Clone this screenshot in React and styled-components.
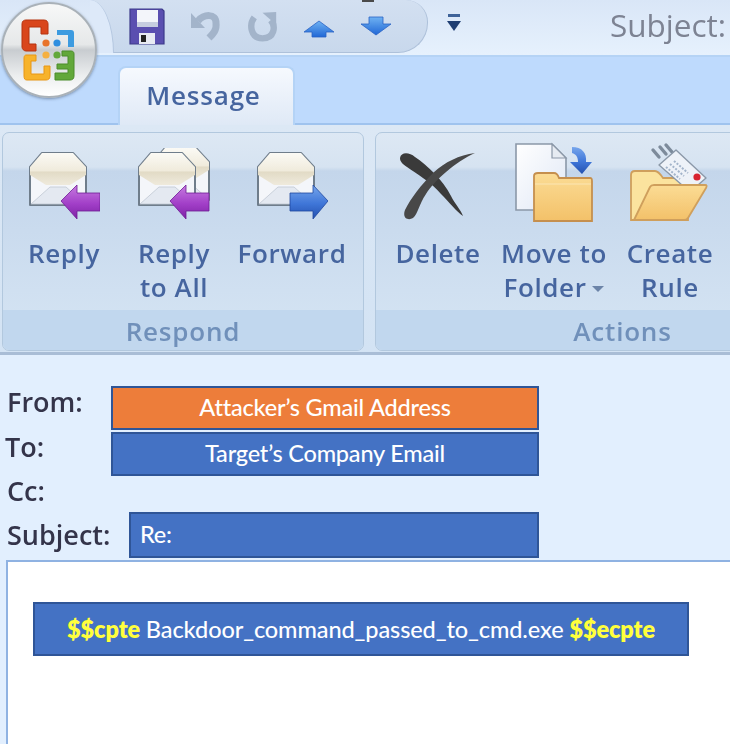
import React from 'react';
import styled, { createGlobalStyle } from 'styled-components';

const GlobalStyle = createGlobalStyle`
  html, body { margin: 0; padding: 0; background: #e2effe; }
  * { box-sizing: border-box; }
`;

const Page = styled.div`
  position: relative;
  width: 730px;
  height: 744px;
  overflow: hidden;
  background: #e2effe;
  font-family: "Open Sans", "Liberation Sans", sans-serif;
`;

// Title bar
const TitleBar = styled.div`
  height: 57px;
  padding: 0 4px 0 90px;
  display: flex;
  align-items: flex-start;
  background: linear-gradient(#d9e6f7, #e6f1fd);
  border-bottom: 2px solid #b5d3f5;
`;

const Qat = styled.div`
  position: relative;
  width: 338px;
  height: 53px;
  padding-left: 39px;
  display: flex;
  align-items: center;
  background: linear-gradient(#d3e0f1, #c8d8ec);
  border: 1px solid #aec1da;
  border-width: 0 1px 1px 0;
  border-radius: 0 22px 30px 0;

  /* the light corner that wraps round the office button */
  &::before {
    content: '';
    position: absolute;
    left: 0;
    top: 0;
    width: 23px;
    height: 53px;
    background: #dde9f9;
    border-right: 1px solid #b3c6df;
    border-radius: 0 100% 0 0;
  }
`;

const QatSlot = styled.div`
  width: ${p => p.$w}px;
  height: 44px;
  padding-top: ${p => p.$top || 0}px;
  display: flex;
  align-items: center;
  justify-content: flex-start;
  filter: blur(0.6px);
`;

const QatMore = styled.div`
  margin: 14px 0 0 19px;
  filter: blur(0.4px);
`;

const WindowTitle = styled.div`
  margin-left: auto;
  font-size: 31.5px;
  line-height: 49px;
  color: #7d8393;
  filter: blur(0.5px);
`;

const TopMark = styled.div`
  position: absolute;
  left: 362px;
  top: 0;
  width: 12px;
  height: 2px;
  background: #4a4a4a;
`;

const OfficeButton = styled.div`
  position: absolute;
  left: 1px;
  top: 2px;
  width: 96px;
  height: 96px;
  border-radius: 50%;
  border: 2px solid #a9b1b8;
  background: linear-gradient(#f7f8f8 0%, #e6e8e9 44%, #c8ccd0 50%, #eceeef 78%, #ffffff 100%);
  box-shadow: 0 1px 3px rgba(60, 80, 110, 0.55);
  display: flex;
  align-items: center;
  justify-content: center;
`;

const LogoWrap = styled.div`
  display: flex;
  filter: blur(0.7px);
`;

// Tabs
const TabStrip = styled.div`
  height: 68px;
  padding: 9px 0 0 118px;
  background: #bedafd;
  border-bottom: 2px solid #9fc3ee;
`;

const Tab = styled.div`
  width: 177px;
  height: 59px;
  padding: 9px 6px 0 0;
  text-align: center;
  font-size: 26px;
  font-weight: 600;
  letter-spacing: 0.8px;
  color: #46659f;
  background: linear-gradient(#f6f9fe, #dfe9f6);
  border: 2px solid #b4d3f6;
  border-bottom: 0;
  border-radius: 8px 8px 0 0;
  filter: blur(0.4px);
`;

const Ribbon = styled.div`
  height: 230px;
  padding: 7px 0 1px 2px;
  display: flex;
  gap: 11px;
  background: linear-gradient(#dce8f5, #d3e3f4);
  border-bottom: 3px solid #a9bdd6;
`;

const Group = styled.div`
  width: ${p => p.$w}px;
  flex: none;
  display: flex;
  flex-direction: column;
  border: 1px solid #b2c8de;
  border-radius: 7px;
  overflow: hidden;
  background: linear-gradient(#dde8f4 0, #d6e3f1 34px, #c4d6eb 38px, #d6e5f4 100%);
`;

const GroupButtons = styled.div`
  height: 177px;
  padding: 9px 0 0 ${p => p.$pad}px;
  display: flex;
`;

const GroupLabel = styled.div`
  height: 40px;
  text-align: center;
  font-size: 26px;
  font-weight: 600;
  line-height: 42px;
  letter-spacing: 0.8px;
  color: #7090ba;
  background: #c1d7ee;
  filter: blur(0.5px);
`;

const RibbonButton = styled.div`
  width: ${p => p.$w}px;
  display: flex;
  flex-direction: column;
  align-items: center;
`;

const IconBox = styled.div`
  height: 80px;
  margin-bottom: 14px;
  display: flex;
  align-items: flex-end;
  justify-content: center;
  filter: blur(0.6px);
`;

const ButtonLabel = styled.div`
  font-size: 26px;
  font-weight: 600;
  line-height: 34px;
  letter-spacing: 0.6px;
  text-align: center;
  white-space: pre-line;
  color: #46659f;
  filter: blur(0.4px);
`;

const Caret = styled.span`
  display: inline-block;
  width: 0;
  height: 0;
  margin: 0 0 5px 6px;
  border-left: 6px solid transparent;
  border-right: 6px solid transparent;
  border-top: 6px solid #6c84a8;
`;

// Message header
const Header = styled.div`
  height: 205px;
  padding-top: 31px;
  display: flex;
  flex-direction: column;
`;

const Row = styled.div`
  height: ${p => p.$h}px;
  margin-bottom: ${p => p.$gap || 0}px;
  padding-left: ${p => p.$left || 7}px;
  display: flex;
  align-items: flex-start;
`;

const FieldLabel = styled.div`
  width: ${p => p.$w}px;
  flex: none;
  font-size: 27px;
  font-weight: 600;
  line-height: ${p => p.$lh}px;
  color: #34344a;
  filter: blur(0.5px);
`;

const FieldBox = styled.div`
  width: ${p => p.$w}px;
  height: ${p => p.$h}px;
  padding: 0 9px;
  font-family: Lato, "Open Sans", sans-serif;
  font-size: 23.5px;
  font-weight: 500;
  line-height: ${p => p.$h - 6}px;
  letter-spacing: -0.2px;
  text-align: ${p => p.$align || 'center'};
  color: #ffffff;
  background: ${p => p.$bg || '#4472c4'};
  border: 2px solid #2f5597;
`;

// Message body
const Body = styled.div`
  height: 184px;
  margin-left: 6px;
  padding: 40px 0 0 25px;
  background: #ffffff;
  border-top: 2px solid #8fb2e2;
  border-left: 2px solid #8fb2e2;
`;

const CommandBox = styled.div`
  width: 656px;
  height: 54px;
  font-family: Lato, "Open Sans", sans-serif;
  font-size: 23.5px;
  font-weight: 500;
  line-height: 50px;
  letter-spacing: -0.1px;
  text-align: center;
  color: #ffffff;
  background: #4472c4;
  border: 2px solid #2f5597;
`;

const Marker = styled.span`
  font-weight: 800;
  color: #ffff3c;
`;

// Icons
const SvgDefs = () => (
  <svg width="0" height="0" style={{ position: 'absolute' }}>
    <defs>
      <linearGradient id="purple" x1="0" y1="0" x2="0" y2="1">
        <stop offset="0" stopColor="#c77be0" />
        <stop offset="0.55" stopColor="#a23fc8" />
        <stop offset="1" stopColor="#7d22a5" />
      </linearGradient>
      <linearGradient id="blue" x1="0" y1="0" x2="0" y2="1">
        <stop offset="0" stopColor="#77a6ec" />
        <stop offset="0.55" stopColor="#3f76d8" />
        <stop offset="1" stopColor="#2450ae" />
      </linearGradient>
      <linearGradient id="flap" x1="0" y1="0" x2="0" y2="1">
        <stop offset="0" stopColor="#fbfaf5" />
        <stop offset="0.55" stopColor="#f0ebdc" />
        <stop offset="0.6" stopColor="#e2dbc6" />
        <stop offset="1" stopColor="#efeadc" />
      </linearGradient>
      <linearGradient id="folder" x1="0" y1="0" x2="0" y2="1">
        <stop offset="0" stopColor="#fbdc95" />
        <stop offset="1" stopColor="#f3c169" />
      </linearGradient>
      <linearGradient id="page" x1="0" y1="0" x2="1" y2="1">
        <stop offset="0" stopColor="#ffffff" />
        <stop offset="1" stopColor="#dfe7f5" />
      </linearGradient>
      <linearGradient id="qatBlue" x1="0" y1="0" x2="0" y2="1">
        <stop offset="0" stopColor="#6fb2f2" />
        <stop offset="1" stopColor="#2067d6" />
      </linearGradient>
    </defs>
  </svg>
);

const Envelope = ({ dx = 0, dy = 0 }) => (
  <g transform={`translate(${dx} ${dy})`}>
    <path d="M14 3H45L58 17V55H2V17Z" fill="#f4f6fa" stroke="#6f7d8b" strokeWidth="2" strokeLinejoin="round" />
    <path d="M3 54L22 37H38L57 54Z" fill="#e4e9f1" stroke="#c0c8d3" strokeWidth="0.8" />
    <path d="M14 3H45L58 17V25L42 35H18L2 25V17Z" fill="url(#flap)" />
  </g>
);

const SideArrow = ({ flip, fill }) => (
  <path
    d={flip ? 'M72 51L57 35V43H34V61H57V69Z' : 'M33 51L49 35V43H72V61H49V69Z'}
    fill={`url(#${fill})`}
    stroke={fill === 'blue' ? '#1e46a0' : '#6f1c96'}
    strokeWidth="0.8"
    strokeLinejoin="round"
  />
);

const ReplyIcon = () => (
  <svg width="72" height="72" viewBox="0 0 72 72">
    <Envelope />
    <SideArrow fill="purple" />
  </svg>
);

const ReplyAllIcon = () => (
  <svg width="74" height="74" viewBox="0 0 74 74">
    <g transform="translate(0 2)">
      <Envelope dx={14} dy={-5} />
      <Envelope />
      <SideArrow fill="purple" />
    </g>
  </svg>
);

const ForwardIcon = () => (
  <svg width="72" height="72" viewBox="0 0 72 72">
    <Envelope />
    <SideArrow flip fill="blue" />
  </svg>
);

const DeleteIcon = () => (
  <svg width="78" height="72" viewBox="0 0 78 72">
    <path d="M1 8C2 2 10 2 16 7C28 15 44 30 52 46C56 54 62 60 64 66C58 62 50 52 42 44C32 32 18 24 8 17C4 14 1 12 1 8Z" fill="#3a3a3a" />
    <path d="M76 3C60 5 46 12 34 23C22 35 12 48 6 60C3 68 9 71 14 68C19 64 20 54 27 44C36 30 56 12 76 3Z" fill="#484848" />
  </svg>
);

const MoveIcon = () => (
  <svg width="80" height="80" viewBox="0 0 80 80">
    <path d="M2 2H38L52 16V68H2Z" fill="url(#page)" stroke="#8b98a8" strokeWidth="1.6" />
    <path d="M38 2V16H52Z" fill="#e6ebf2" stroke="#8b98a8" strokeWidth="1.2" />
    <path d="M58 5C68 5 73 11 72 20H78L68 32L56 20H64C64 15 62 12 58 11Z" fill="url(#blue)" />
    <path d="M20 79V34C20 31 22 31 24 31H40C43 31 44 33 45 36H76C78 36 78 37 78 39V79Z" fill="url(#folder)" stroke="#c58f4e" strokeWidth="1.8" />
    <path d="M21 42H77" stroke="#fce6b3" strokeWidth="1.2" />
  </svg>
);

const RuleIcon = () => (
  <svg width="80" height="80" viewBox="0 0 80 80">
    <path d="M23 8L29 15M30 5L36 12M36 3L42 10" stroke="#7d8b9b" strokeWidth="3.4" strokeLinecap="round" />
    <path d="M1 78V33C1 30 3 29 5 29H25C28 29 31 33 33 36H58V78Z" fill="#fbe39e" stroke="#cf9f5c" strokeWidth="1.8" />
    <path d="M46 8L76 36L60 50L29 23Z" fill="#eef2f8" stroke="#8b98a8" strokeWidth="1.4" strokeLinejoin="round" />
    <path d="M40 22L54 34M36 25L50 37M44 19L58 31" stroke="#a3b4ca" strokeWidth="2" strokeDasharray="2 1.5" />
    <circle cx="67" cy="35" r="3.6" fill="#d8242f" />
    <path d="M4 78L20 45C21 43 22 43 24 43H75C77 43 77 44 76 46L58 76C57 78 56 78 54 78Z" fill="url(#folder)" stroke="#cf9f5c" strokeWidth="1.8" strokeLinejoin="round" />
  </svg>
);

const SaveIcon = () => (
  <svg width="36" height="37" viewBox="0 0 36 37">
    <path d="M1 1H33L35 3V36H1Z" fill="#5a4fb0" stroke="#3d3a8a" strokeWidth="1.2" />
    <rect x="8" y="2" width="21" height="17" fill="#f3f5fa" />
    <rect x="8" y="14" width="21" height="5" fill="#c6cde0" />
    <rect x="10" y="25" width="16" height="11" fill="#e8ebf3" />
    <rect x="12" y="27" width="5" height="7" fill="#222" />
  </svg>
);

const UndoIcon = () => (
  <svg width="32" height="32" viewBox="0 0 32 32">
    <path d="M2 3V18H16Z" fill="#a3b4ca" />
    <path d="M9 11C15 4 27 3 27 13C28 20 24 24 20 28" fill="none" stroke="#a3b4ca" strokeWidth="7" />
  </svg>
);

const RedoIcon = () => (
  <svg width="31" height="31" viewBox="0 0 34 34">
    <path d="M17 2L32 1V15Z" fill="#a3b4ca" />
    <path d="M8 7C2 15 4 30 17 30C30 30 32 17 26 10" fill="none" stroke="#a3b4ca" strokeWidth="7" />
  </svg>
);

const UpIcon = () => (
  <svg width="32" height="18" viewBox="0 0 32 18">
    <path d="M16 1L31 12H23V17H9V12H1Z" fill="url(#qatBlue)" stroke="#2a62c4" strokeWidth="0.8" strokeLinejoin="round" />
  </svg>
);

const DownIcon = () => (
  <svg width="32" height="20" viewBox="0 0 32 20">
    <path d="M16 19L31 8H23V1H9V8H1Z" fill="url(#qatBlue)" stroke="#2a62c4" strokeWidth="0.8" strokeLinejoin="round" />
  </svg>
);

const MoreIcon = () => (
  <svg width="14" height="18" viewBox="0 0 14 18">
    <rect x="1" y="0" width="12" height="3" fill="#3f6399" />
    <path d="M0 7H14L7 17Z" fill="#1f3f73" />
  </svg>
);

const OfficeLogo = () => (
  <svg width="60" height="62" viewBox="0 0 60 62">
    <path d="M3 5C3 2 5 1 7 1H25C28 1 29 3 29 5V15H22V8H10V25H17V32H7C5 32 3 30 3 28Z" fill="#d9461c" stroke="#b5330f" strokeWidth="1" />
    <path d="M7 36H17V42H12V55H25V47H31V57C31 60 29 61 27 61H8C6 61 5 60 5 57V39C5 37 6 36 7 36Z" fill="#f7b32b" stroke="#e89615" strokeWidth="1" />
    <path d="M38 45H49V37H43V32H52C54 32 55 33 55 35V57C55 60 53 61 51 61H36V54H49V50H38Z" fill="#62a83a" stroke="#4a8c2a" strokeWidth="1" />
    <path d="M38 11H52C54 11 55 12 55 14V28H49V16H38Z" fill="#3d9be0" />
    <circle cx="27" cy="24" r="3.6" fill="#e8742b" />
    <circle cx="38" cy="24" r="3.6" fill="#2f8fe0" />
    <circle cx="27" cy="36" r="3.6" fill="#f5b041" />
    <circle cx="38" cy="36" r="3.6" fill="#62a83a" />
  </svg>
);

const respond = [
  { label: 'Reply', w: 110, icon: <ReplyIcon /> },
  { label: 'Reply\nto All', w: 110, icon: <ReplyAllIcon /> },
  { label: 'Forward', w: 126, icon: <ForwardIcon /> },
];

const actions = [
  { label: 'Delete', w: 110, icon: <DeleteIcon /> },
  { label: 'Move to\nFolder', w: 122, icon: <MoveIcon />, caret: true },
  { label: 'Create\nRule', w: 110, icon: <RuleIcon /> },
];

const renderButtons = (items) =>
  items.map((item) => (
    <RibbonButton key={item.label} $w={item.w}>
      <IconBox>{item.icon}</IconBox>
      <ButtonLabel>
        {item.label}
        {item.caret && <Caret />}
      </ButtonLabel>
    </RibbonButton>
  ));

export default function App() {
  return (
    <Page>
      <GlobalStyle />
      <SvgDefs />
      <TitleBar>
        <Qat>
          <QatSlot $w={60}><SaveIcon /></QatSlot>
          <QatSlot $w={58}><UndoIcon /></QatSlot>
          <QatSlot $w={56}><RedoIcon /></QatSlot>
          <QatSlot $w={57} $top={5}><UpIcon /></QatSlot>
          <QatSlot $w={40}><DownIcon /></QatSlot>
        </Qat>
        <QatMore><MoreIcon /></QatMore>
        <WindowTitle>Subject:</WindowTitle>
      </TitleBar>
      <TopMark />
      <OfficeButton><LogoWrap><OfficeLogo /></LogoWrap></OfficeButton>

      <TabStrip>
        <Tab>Message</Tab>
      </TabStrip>

      <Ribbon>
        <Group $w={362}>
          <GroupButtons $pad={6}>{renderButtons(respond)}</GroupButtons>
          <GroupLabel>Respond</GroupLabel>
        </Group>
        <Group $w={495}>
          <GroupButtons $pad={7}>{renderButtons(actions)}</GroupButtons>
          <GroupLabel>Actions</GroupLabel>
        </Group>
      </Ribbon>

      <Header>
        <Row $h={44} $gap={2}>
          <FieldLabel $w={104} $lh={31}>From:</FieldLabel>
          <FieldBox $w={428} $h={44} $bg="#ed7d3a">Attacker’s Gmail Address</FieldBox>
        </Row>
        <Row $h={44} $left={5}>
          <FieldLabel $w={106} $lh={29}>To:</FieldLabel>
          <FieldBox $w={428} $h={44}>Target’s Company Email</FieldBox>
        </Row>
        <Row $h={36}>
          <FieldLabel $w={104} $lh={29}>Cc:</FieldLabel>
        </Row>
        <Row $h={46}>
          <FieldLabel $w={122} $lh={45}>Subject:</FieldLabel>
          <FieldBox $w={410} $h={46} $align="left">Re:</FieldBox>
        </Row>
      </Header>

      <Body>
        <CommandBox>
          <Marker>$$cpte</Marker> Backdoor_command_passed_to_cmd.exe <Marker>$$ecpte</Marker>
        </CommandBox>
      </Body>
    </Page>
  );
}
